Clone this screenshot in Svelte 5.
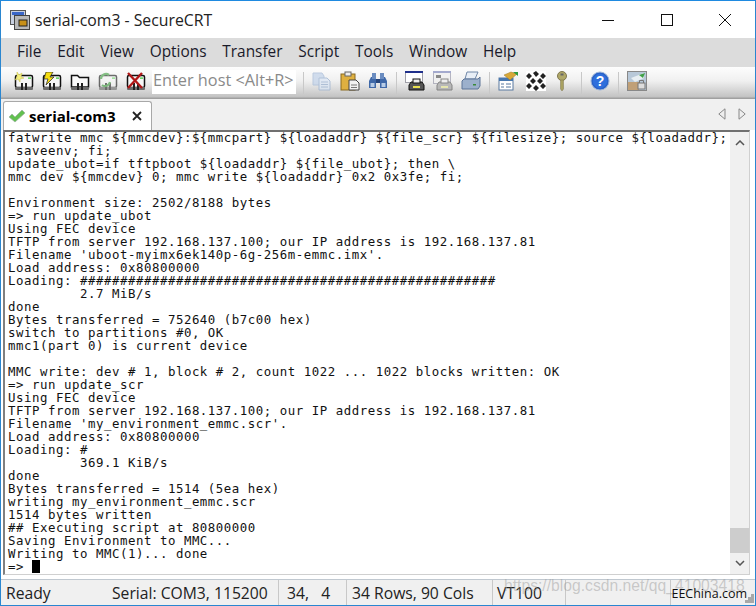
<script>
  const menus = ['File', 'Edit', 'View', 'Options', 'Transfer', 'Script', 'Tools', 'Window', 'Help'];

  const lines = [
    'fatwrite mmc ${mmcdev}:${mmcpart} ${loadaddr} ${file_scr} ${filesize}; source ${loadaddr};',
    ' saveenv; fi;',
    'update_ubot=if tftpboot ${loadaddr} ${file_ubot}; then \\',
    'mmc dev ${mmcdev} 0; mmc write ${loadaddr} 0x2 0x3fe; fi;',
    '',
    'Environment size: 2502/8188 bytes',
    '=> run update_ubot',
    'Using FEC device',
    'TFTP from server 192.168.137.100; our IP address is 192.168.137.81',
    "Filename 'uboot-myimx6ek140p-6g-256m-emmc.imx'.",
    'Load address: 0x80800000',
    'Loading: ####################################################',
    '         2.7 MiB/s',
    'done',
    'Bytes transferred = 752640 (b7c00 hex)',
    'switch to partitions #0, OK',
    'mmc1(part 0) is current device',
    '',
    'MMC write: dev # 1, block # 2, count 1022 ... 1022 blocks written: OK',
    '=> run update_scr',
    'Using FEC device',
    'TFTP from server 192.168.137.100; our IP address is 192.168.137.81',
    "Filename 'my_environment_emmc.scr'.",
    'Load address: 0x80800000',
    'Loading: #',
    '         369.1 KiB/s',
    'done',
    'Bytes transferred = 1514 (5ea hex)',
    'writing my_environment_emmc.scr',
    '1514 bytes written',
    '## Executing script at 80800000',
    'Saving Environment to MMC...',
    'Writing to MMC(1)... done'
  ];
</script>

{#snippet session()}
  <rect x="1.500" y="3.500" width="17" height="12" rx="1.500" fill="#f6f6f6" stroke="#111" stroke-width="1.500"/>
  <rect x="1" y="15" width="18" height="3" rx="1" fill="#6c6c6c"/>
  <rect x="7" y="11" width="2" height="7" fill="#222"/>
  <rect x="11" y="11" width="2" height="7" fill="#222"/>
  <rect x="14" y="5.500" width="3" height="1.200" fill="#3c3"/>
{/snippet}

<div class="window">
  <header class="titlebar">
    <svg class="appicon" width="20" height="20" viewBox="0 0 20 20">
      <rect x="0.500" y="0.500" width="15" height="14" fill="#c8d0e0" stroke="#555"/>
      <rect x="2" y="2" width="12" height="3" fill="#3a66c8"/>
      <rect x="4.500" y="5.500" width="15" height="14" fill="#b8b8b8" stroke="#444"/>
      <rect x="9" y="10" width="8" height="6" fill="#c89018" stroke="#222"/>
    </svg>
    <span class="title">serial-com3 - SecureCRT</span>
    <div class="winbtns">
      <svg width="14" height="14" viewBox="0 0 14 14"><path d="M1 7.500h12" stroke="#111"/></svg>
      <svg width="14" height="14" viewBox="0 0 14 14"><rect x="1.500" y="1.500" width="11" height="11" fill="none" stroke="#111"/></svg>
      <svg width="14" height="14" viewBox="0 0 14 14"><path d="M1 1l12 12M13 1L1 13" stroke="#111" fill="none"/></svg>
    </div>
  </header>

  <nav class="menubar">
    {#each menus as m}<span>{m}</span>{/each}
  </nav>

  <div class="toolbar">
    <div class="group sessions">
      <svg width="20" height="20" viewBox="0 0 20 20">{@render session()}<path d="M3 0l2 3 3-2-1 4 3 1-4 1 0 3-2-3-3 1 2-3z" fill="#f4ee80" stroke="#c8c040" stroke-width=".5"/></svg>
      <svg width="20" height="20" viewBox="0 0 20 20">{@render session()}<path d="M4 0h7L8 5h4L4 13l2-6H2z" fill="#f5dc10" stroke="#222" stroke-width=".7"/></svg>
      <svg width="20" height="20" viewBox="0 0 20 20"><path d="M1.500 15V3.500h6l2 2h9V15z" fill="#fafafa" stroke="#111" stroke-width="1.500"/><rect x="1" y="15" width="18" height="3" rx="1" fill="#6c6c6c"/><rect x="7" y="11" width="2" height="7" fill="#222"/><rect x="11" y="11" width="2" height="7" fill="#222"/></svg>
      <svg class="dim" width="20" height="20" viewBox="0 0 20 20">{@render session()}<path d="M3 7a5 5 0 0 1 8-4M12 10a5 5 0 0 1-8 3" fill="none" stroke="#3a9a3a" stroke-width="2.200"/></svg>
      <svg width="20" height="20" viewBox="0 0 20 20">{@render session()}<path d="M2 1l14 15M16 1L2 16" stroke="#b01818" stroke-width="2.400"/></svg>
    </div>
    <div class="hostbox">Enter host &lt;Alt+R&gt;</div>
    <i class="sep first"></i>
    <div class="group tight">
      <svg class="soft" width="20" height="20" viewBox="0 0 20 20"><path d="M1 2h9l2 3v9H1z" fill="#c4d4ea" stroke="#a8bcd8"/><path d="M7 7h8l3 3v9H7z" fill="#dbe6f4" stroke="#9cb2d0"/><path d="M9 11h7M9 13.500h7M9 16h7" stroke="#9cb2d0"/></svg>
      <svg width="20" height="20" viewBox="0 0 20 20"><rect x="1" y="3" width="14" height="16" fill="#dfb040" stroke="#8a6a20"/><rect x="5" y="1" width="6" height="4" fill="#eee" stroke="#666"/><path d="M9 9h7l3 3v7H9z" fill="#f2f2f2" stroke="#444"/><path d="M11 14h6M11 16.500h6" stroke="#777"/></svg>
      <svg width="20" height="20" viewBox="0 0 20 20"><path d="M3 6h5v11H1V10zM12 6h5l2 4v7h-7z" fill="#3f68a8"/><rect x="4" y="2" width="4" height="6" fill="#6a8cc0"/><rect x="12" y="2" width="4" height="6" fill="#6a8cc0"/><rect x="8" y="8" width="4" height="4" fill="#27467c"/><rect x="2.500" y="12" width="4" height="4" fill="#b8cce6"/><rect x="13.500" y="12" width="4" height="4" fill="#b8cce6"/></svg>
    </div>
    <i class="sep"></i>
    <div class="group tight">
      <svg width="20" height="20" viewBox="0 0 20 20"><rect x="0.500" y="0.500" width="17" height="11" fill="#fff" stroke="#a0a0a8"/><path d="M0 1h18" stroke="#20308c" stroke-width="2"/><path d="M6 11h11l2 3v5H4v-5z" fill="#555" stroke="#111"/><rect x="8" y="8" width="7" height="4" fill="#eee" stroke="#111"/><rect x="8" y="15" width="7" height="2" fill="#e8e050"/></svg>
      <svg class="soft" width="20" height="20" viewBox="0 0 20 20"><rect x="0.500" y="0.500" width="17" height="12" fill="#f0f0f0" stroke="#a0a0b0"/><path d="M0 1h18" stroke="#8890c0" stroke-width="2"/><rect x="3" y="4" width="5" height="3" fill="#666"/><path d="M6 11h11l2 3v5H4v-5z" fill="#aaa" stroke="#666"/><rect x="8" y="8" width="7" height="4" fill="#eee" stroke="#666"/><rect x="8" y="15" width="7" height="2" fill="#e8e8a0"/></svg>
      <svg width="20" height="20" viewBox="0 0 20 20"><path d="M6 1h11l-3 7H4z" fill="#e8eef6" stroke="#7088a8"/><path d="M3 8h14l2-2v9l-2 3H1v-8z" fill="#9cb0cc" stroke="#5c7498"/><rect x="12" y="13" width="3" height="1.500" fill="#3a8a3a"/></svg>
    </div>
    <i class="sep"></i>
    <div class="group tight">
      <svg width="20" height="20" viewBox="0 0 20 20"><rect x="1" y="7" width="14" height="12" fill="#fff" stroke="#5878a0"/><path d="M1 7h14v3H1z" fill="#4878b0"/><path d="M3 13h3M8 13h5M3 16h3M8 16h5" stroke="#5878a0"/><path d="M6 4l7-3 6 2-7 6z" fill="#d8a838" stroke="#a07820" stroke-width=".5"/><path d="M15 1h5v4z" fill="#309a40"/></svg>
      <svg width="20" height="20" viewBox="0 0 20 20"><rect width="20" height="20" fill="#fff"/><g fill="#222"><path d="M0 5l3-3 3 3-3 3zM7 2l3-2 3 3-3 3zM14 5l3-3 3 3-3 3zM4 10l3-3 3 3-3 3zM11 10l3-3 3 3-3 3zM0 15l3-3 3 3-3 3zM7 17l3-3 3 3-3 3zM14 15l3-3 3 3-3 3z"/></g></svg>
      <svg class="keyicon" width="14" height="20" viewBox="0 0 14 20"><circle cx="7" cy="5" r="4.500" fill="#b0a868" stroke="#807850"/><rect x="5.500" y="2.500" width="3" height="2" fill="#666"/><path d="M5.500 9h3v9L7 20l-1.500-2z" fill="#a8a060" stroke="#807850" stroke-width=".5"/></svg>
    </div>
    <i class="sep key"></i>
    <svg class="solo" width="20" height="20" viewBox="0 0 20 20"><circle cx="10" cy="10" r="9" fill="#2a62c8" stroke="#9cb4d8"/><circle cx="10" cy="10" r="7.200" fill="#2f6fdc"/><text x="10" y="15" text-anchor="middle" class="help">?</text></svg>
    <i class="sep"></i>
    <svg class="solo" width="20" height="20" viewBox="0 0 20 20"><rect x="0.500" y="0.500" width="19" height="19" fill="#b8c8d8" stroke="#888"/><rect x="1" y="11" width="11" height="8" fill="#c0a078"/><path d="M4 7l13-5v5l-9 4z" fill="#e8eef2"/><path d="M12 4l6-2-2 5z" fill="#40a048"/><rect x="11" y="12" width="7" height="6" fill="#ddd" stroke="#777"/><path d="M12.500 12V9.500h4V12" fill="none" stroke="#777"/></svg>
  </div>

  <div class="tabstrip">
    <div class="tab">
      <svg width="18" height="14" viewBox="0 0 18 14"><path d="M1 8l3-3 3 3 7-7 3 3L7 13z" fill="#62c050" stroke="#9cb0a0" stroke-width=".7"/></svg>
      <b>serial-com3</b>
      <svg class="close" width="10" height="10" viewBox="0 0 10 10"><path d="M1 1l8 8M9 1L1 9" stroke="#222" stroke-width="1.800"/></svg>
    </div>
    <div class="tabnav">
      <svg width="8" height="12" viewBox="0 0 8 12"><path d="M7 .8v10.400L.8 6z" fill="#eee" stroke="#888"/></svg>
      <svg width="8" height="12" viewBox="0 0 8 12"><path d="M1 .8v10.400L7.200 6z" fill="#eee" stroke="#888"/></svg>
    </div>
  </div>

  <div class="session">
    <div class="terminal">
      {#each lines as l}<div class="line">{l}</div>{/each}
      <div class="line">=&gt; <span class="cursor"></span></div>
    </div>
    <div class="scrollbar">
      <svg width="10" height="6" viewBox="0 0 10 6"><path d="M1 5l4-4 4 4" fill="none" stroke="#555" stroke-width="1.500"/></svg>
      <div class="track"><div class="thumb"></div></div>
      <svg width="10" height="6" viewBox="0 0 10 6"><path d="M1 1l4 4 4-4" fill="none" stroke="#555" stroke-width="1.500"/></svg>
    </div>
  </div>

  <footer class="statusbar">
    <span class="ready">Ready</span>
    <span class="serial">Serial: COM3, 115200</span>
    <span class="pos">34,&nbsp;&nbsp;&nbsp;4</span>
    <span class="size">34 Rows, 90 Cols</span>
    <span class="vt">VT100</span>
    <span class="rest"></span>
    <span class="caps"></span>
    <svg class="grip" width="9" height="9" viewBox="0 0 9 9" fill="#a8a8a8"><path d="M6 0h3v3H6zM3 3h3v3H3zM6 3h3v3H6zM0 6h3v3H0zM3 6h3v3H3zM6 6h3v3H6z"/></svg>
    <span class="watermark">https://blog.csdn.net/qq_41003418</span>
    <span class="brand">EEChina.com</span>
  </footer>
</div>

<style>
  :global(body) {
    margin: 0;
    background: #fff;
  }

  .window {
    width: 756px;
    height: 606px;
    box-sizing: border-box;
    border: 1px solid #2a86d0;
    border-top-color: #1f8ae0;
    display: flex;
    flex-direction: column;
    font-family: "Open Sans", "Noto Sans", sans-serif;
    color: #111;
    overflow: hidden;
  }

  .titlebar {
    height: 37px;
    flex: none;
    display: flex;
    align-items: center;
    padding-left: 9px;
    background: #fff;
  }

  .appicon {
    margin-right: 5px;
  }

  .title {
    font-size: 15.800px;
    color: #222;
  }

  .winbtns {
    margin-left: auto;
    display: flex;
    gap: 44.500px;
    padding-right: 23px;
  }

  .menubar {
    height: 29px;
    flex: none;
    background: #dcdcdc;
    display: flex;
    align-items: center;
    gap: 15.800px;
    padding: 0 0 3px 16px;
    box-sizing: border-box;
    font-size: 15.400px;
    color: #1a1a2a;
  }

  .toolbar {
    height: 31px;
    flex: none;
    display: flex;
    align-items: center;
    padding-left: 13px;
    background: linear-gradient(#fdfdfd 0%, #f0f0f0 45%, #c4c4c4 95%, #a8a8a8 100%);
  }

  .group {
    display: flex;
  }

  .sessions {
    gap: 8px;
    margin-top: -2px;
  }

  .tight {
    gap: 8px;
    margin-top: -3px;
  }

  .keyicon {
    margin-left: 1px;
  }

  .dim {
    opacity: 0.6;
  }

  .soft {
    opacity: 0.75;
  }

  .hostbox {
    width: 144px;
    height: 24px;
    margin-left: 6px;
    margin-top: -1px;
    background: #fff;
    color: #8a8a8a;
    font-size: 16.300px;
    line-height: 20px;
    box-sizing: border-box;
    padding-left: 1px;
    white-space: nowrap;
  }

  .sep {
    width: 1px;
    height: 22px;
    margin: 0 8px;
    background: #c8c8c8;
  }

  .sep.first {
    margin-left: 7px;
  }

  .sep.key {
    margin-left: 12px;
  }

  .solo {
    margin-top: -3px;
  }

  .help {
    font: bold 14px "Liberation Sans", sans-serif;
    fill: #fff;
  }

  .tabstrip {
    height: 32px;
    flex: none;
    background: #f0f0f0;
    display: flex;
    align-items: flex-end;
    padding-left: 2px;
    border-top: 1px solid #a0a0a0;
    box-sizing: border-box;
  }

  .tab {
    width: 149px;
    height: 29px;
    box-sizing: border-box;
    background: #fff;
    border: 1px solid #a8a8a8;
    border-bottom: none;
    border-radius: 3px 3px 0 0;
    display: flex;
    align-items: center;
    padding-left: 4px;
  }

  .tab b {
    font-size: 15px;
    margin-left: 3px;
    color: #000;
  }

  .close {
    margin-left: auto;
    margin-right: 9px;
  }

  .tabnav {
    margin-left: auto;
    display: flex;
    gap: 12px;
    padding: 0 9px 10px 0;
  }

  .session {
    flex: 1;
    min-height: 0;
    margin: 0 5px 4px 2px;
    border: 1px solid #d0d0d0;
    border-top: 2px solid #707070;
    border-left: 2px solid #808080;
    display: flex;
    background: #fff;
  }

  .terminal {
    flex: 1;
    padding-left: 3px;
    font-family: "DejaVu Sans Mono", monospace;
    font-size: 12.400px;
    letter-spacing: 0.535px;
    line-height: 13px;
    color: #111;
  }

  .line {
    height: 13px;
    position: relative;
    top: -1px;
    white-space: pre;
  }

  .cursor {
    display: inline-block;
    width: 8px;
    height: 13px;
    background: #000;
    vertical-align: -2px;
  }

  .scrollbar {
    width: 19px;
    flex: none;
    background: #f0f0f0;
    display: flex;
    flex-direction: column;
    align-items: center;
    padding: 8px 0;
    box-sizing: border-box;
  }

  .track {
    flex: 1;
    width: 100%;
    display: flex;
    flex-direction: column;
    justify-content: flex-end;
    padding-bottom: 7px;
  }

  .thumb {
    height: 25px;
    background: #cdcdcd;
  }

  .statusbar {
    position: relative;
    height: 26px;
    flex: none;
    background: #f0f0f0;
    display: flex;
    align-items: center;
    font-size: 15.700px;
    color: #222;
    border-top: 1px solid #c0c8d0;
    box-sizing: border-box;
  }

  .statusbar > span {
    height: 100%;
    display: flex;
    align-items: center;
    box-sizing: border-box;
    white-space: nowrap;
  }

  .ready {
    width: 111px;
    padding-left: 5px;
  }

  .serial {
    width: 167px;
    border-right: 1px solid #c8c8c8;
  }

  .pos {
    width: 68px;
    padding-left: 8px;
    border-right: 1px solid #c8c8c8;
  }

  .size {
    width: 146px;
    padding-left: 5px;
    border-right: 1px solid #c8c8c8;
  }

  .vt {
    width: 73px;
    padding-left: 4px;
    border-right: 1px solid #c8c8c8;
  }

  .rest {
    width: 105px;
    border-right: 1px solid #c8c8c8;
  }

  .caps {
    width: 60px;
  }

  .grip {
    position: absolute;
    right: 1px;
    bottom: 2px;
  }

  .statusbar > .watermark {
    position: absolute;
    left: 503px;
    top: -4px;
    font-family: "Liberation Sans", sans-serif;
    font-size: 15.700px;
    color: rgba(150, 150, 150, 0.45);
    height: 20px;
  }

  .statusbar > .brand {
    position: absolute;
    right: 8px;
    top: 4px;
    font-size: 12.500px;
    height: 18px;
    color: #111;
  }
</style>
